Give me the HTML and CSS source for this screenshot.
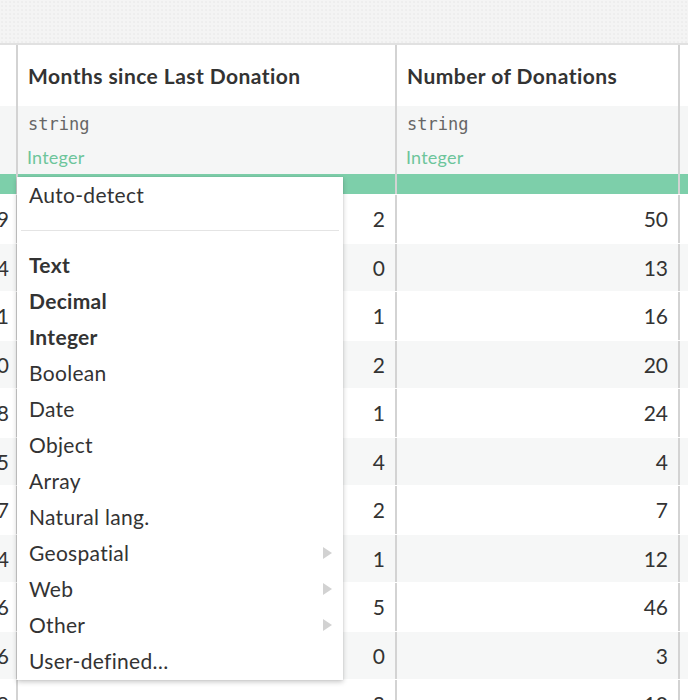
FILE: index.html
```html
<!DOCTYPE html>
<html>
<head>
<meta charset="utf-8">
<link rel="stylesheet" href="styles.css">
</head>
<body>
<div class="page">
  <div class="topbar"></div>
  <div class="table">
    <div class="row head">
      <div class="cell c0"></div>
      <div class="cell c1"><span class="title">Months since Last Donation</span></div>
      <div class="cell c2"><span class="title">Number of Donations</span></div>
      <div class="cell c3"></div>
    </div>
    <div class="row types">
      <div class="cell c0"></div>
      <div class="cell c1"><span class="storage">string</span><span class="meaning">Integer</span></div>
      <div class="cell c2"><span class="storage">string</span><span class="meaning">Integer</span></div>
      <div class="cell c3"></div>
    </div>
    <div class="row bar">
      <div class="cell c0"></div>
      <div class="cell c1"></div>
      <div class="cell c2"></div>
      <div class="cell c3"></div>
    </div>
    <div class="row data"><div class="cell c0">9</div><div class="cell c1">2</div><div class="cell c2">50</div><div class="cell c3"></div></div>
    <div class="row data odd"><div class="cell c0">4</div><div class="cell c1">0</div><div class="cell c2">13</div><div class="cell c3"></div></div>
    <div class="row data"><div class="cell c0">1</div><div class="cell c1">1</div><div class="cell c2">16</div><div class="cell c3"></div></div>
    <div class="row data odd"><div class="cell c0">0</div><div class="cell c1">2</div><div class="cell c2">20</div><div class="cell c3"></div></div>
    <div class="row data"><div class="cell c0">8</div><div class="cell c1">1</div><div class="cell c2">24</div><div class="cell c3"></div></div>
    <div class="row data odd"><div class="cell c0">5</div><div class="cell c1">4</div><div class="cell c2">4</div><div class="cell c3"></div></div>
    <div class="row data"><div class="cell c0">7</div><div class="cell c1">2</div><div class="cell c2">7</div><div class="cell c3"></div></div>
    <div class="row data odd"><div class="cell c0">4</div><div class="cell c1">1</div><div class="cell c2">12</div><div class="cell c3"></div></div>
    <div class="row data"><div class="cell c0">6</div><div class="cell c1">5</div><div class="cell c2">46</div><div class="cell c3"></div></div>
    <div class="row data odd"><div class="cell c0">6</div><div class="cell c1">0</div><div class="cell c2">3</div><div class="cell c3"></div></div>
    <div class="row data"><div class="cell c0">9</div><div class="cell c1">2</div><div class="cell c2">10</div><div class="cell c3"></div></div>
  </div>

  <ul class="menu">
    <li class="item">Auto-detect</li>
    <li class="sep"></li>
    <li class="item strong">Text</li>
    <li class="item strong">Decimal</li>
    <li class="item strong">Integer</li>
    <li class="item">Boolean</li>
    <li class="item">Date</li>
    <li class="item">Object</li>
    <li class="item">Array</li>
    <li class="item">Natural lang.</li>
    <li class="item sub">Geospatial</li>
    <li class="item sub">Web</li>
    <li class="item sub">Other</li>
    <li class="item">User-defined…</li>
  </ul>
</div>
</body>
</html>
```
FILE: styles.css
```css
html, body {
  margin: 0;
  padding: 0;
  background: #ffffff;
}
body {
  font-family: Lato, "Noto Sans", sans-serif;
  color: #333333;
}
.page {
  position: relative;
  width: 688px;
  height: 700px;
  overflow: hidden;
}
.topbar {
  height: 43px;
  background-color: #f4f4f4;
  background-image: radial-gradient(#e6e6e6 0.6px, transparent 0.8px);
  background-size: 4px 4px;
  border-bottom: 2px solid #e1e1e1;
}
.table {
  display: flex;
  flex-direction: column;
}
.row {
  display: grid;
  grid-template-columns: 16px 379px 283px 1fr;
}
.cell {
  border-left: 2px solid #d3d3d3;
  overflow: hidden;
  white-space: nowrap;
  box-sizing: border-box;
}
.cell.c0 {
  border-left: none;
}
.head {
  height: 61px;
  background: #ffffff;
}
.head .cell {
  display: flex;
  align-items: center;
  padding-left: 10px;
}
.title {
  font-weight: 700;
  font-size: 21px;
  letter-spacing: 0.45px;
  color: #333333;
}
.types {
  height: 68px;
  background: #f5f6f6;
}
.types .cell {
  display: flex;
  flex-direction: column;
  padding-left: 10px;
}
.storage {
  font-family: "DejaVu Sans Mono", monospace;
  font-size: 17px;
  color: #666666;
  line-height: 22px;
  margin-top: 7px;
}
.meaning {
  font-size: 18px;
  letter-spacing: 0.2px;
  color: #6dc59b;
  line-height: 22px;
  margin-top: 11px;
  margin-left: -1px;
}
.bar {
  height: 20px;
  background: #7dcfaa;
}
.data {
  height: 48.5px;
  background: #ffffff;
  border-top: 1px solid #ffffff;
  box-sizing: border-box;
}
.data.odd {
  background: #f6f7f7;
}
.data .cell {
  display: flex;
  align-items: center;
  justify-content: flex-end;
  padding-right: 10px;
  font-size: 21px;
  color: #333333;
}
.data .cell.c0 {
  padding-right: 7px;
}

.menu {
  position: absolute;
  left: 17px;
  top: 177px;
  width: 326px;
  margin: 0;
  padding: 0 0 1px;
  list-style: none;
  background: #ffffff;
  box-shadow: 0 2px 5px rgba(0, 0, 0, 0.22), 0 0 1px rgba(0, 0, 0, 0.15);
  box-sizing: border-box;
}
.item {
  position: relative;
  height: 36px;
  line-height: 36px;
  padding-left: 12px;
  font-size: 21px;
  letter-spacing: 0.3px;
  color: #333333;
}
.item.strong {
  font-weight: 700;
}
.sep {
  height: 1px;
  margin: 17px 4px 16px;
  background: #e4e4e4;
}
.item.sub::after {
  content: "";
  position: absolute;
  right: 11px;
  top: 12px;
  border-top: 6px solid transparent;
  border-bottom: 6px solid transparent;
  border-left: 9px solid #d2d2d2;
}
```
